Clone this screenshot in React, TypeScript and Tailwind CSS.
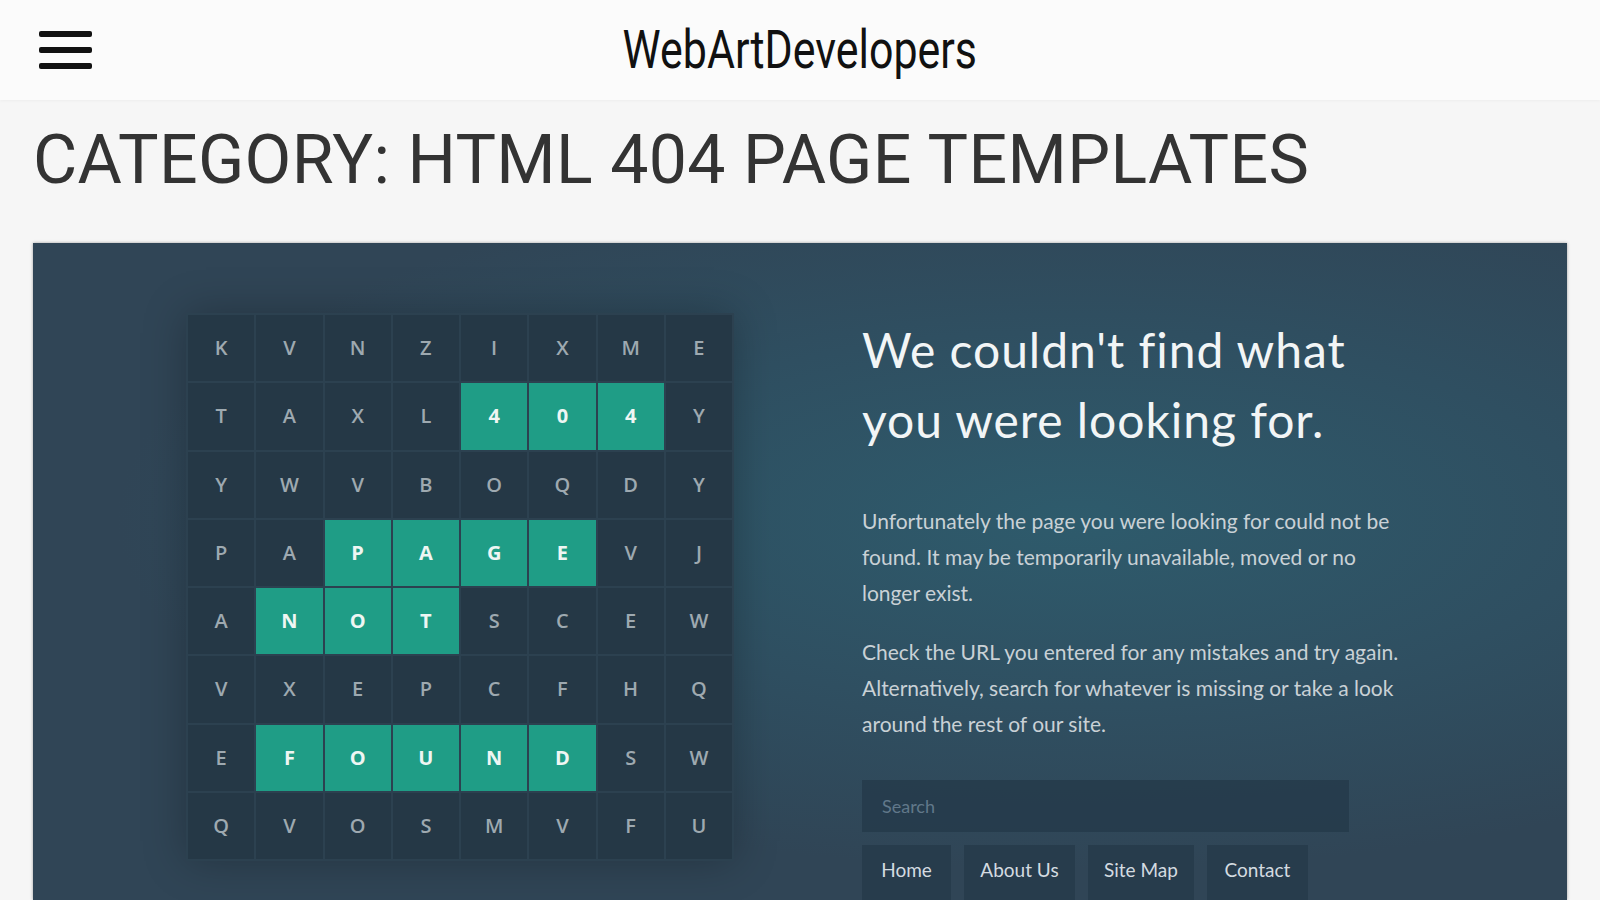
import React from 'react';

const rows = [
  'KVNZIXME',
  'TAXL404Y',
  'YWVBOQDY',
  'PAPAGEVJ',
  'ANOTSCEW',
  'VXEPCFHQ',
  'EFOUNDSW',
  'QVOSMVFU',
];

// highlighted cells: [row, col]
const lit: Record<number, number[]> = {
  1: [4, 5, 6],
  3: [2, 3, 4, 5],
  4: [1, 2, 3],
  6: [1, 2, 3, 4, 5],
};

const LetterGrid: React.FC = () => (
  <div className="grid h-[548px] w-[548px] shrink-0 grid-cols-8 gap-[2px] bg-[#2c4150] p-[2px] shadow-[0_0_40px_rgba(0,0,0,0.25)]">
    {rows.map((row, r) =>
      row.split('').map((ch, c) => {
        const on = lit[r]?.includes(c);
        return (
          <div
            key={`${r}-${c}`}
            className={
              on
                ? 'flex items-center justify-center bg-[#1f9d86] text-[20px] font-bold text-[#eef6f3]'
                : 'flex items-center justify-center bg-[#253846] text-[20px] font-semibold text-[#9ea9b0]'
            }
            style={{ fontFamily: '"Open Sans", sans-serif' }}
          >
            {ch}
          </div>
        );
      })
    )}
  </div>
);

const links = [
  { label: 'Home', w: 'w-[89px]' },
  { label: 'About Us', w: 'w-[111px]' },
  { label: 'Site Map', w: 'w-[106px]' },
  { label: 'Contact', w: 'w-[101px]' },
];

const App: React.FC = () => {
  return (
    <div className="h-[900px] overflow-hidden bg-[#f6f6f6]" style={{ fontFamily: 'Roboto, sans-serif' }}>
      <header className="grid h-[100px] grid-cols-[1fr_auto_1fr] items-center bg-[#fbfbfb] shadow-[0_1px_3px_rgba(0,0,0,0.04)]">
        <div className="pl-[39px]">
          <div className="flex w-[53px] flex-col gap-[10px]">
            <span className="h-[6px] rounded-[2px] bg-[#111]" />
            <span className="h-[6px] rounded-[2px] bg-[#111]" />
            <span className="h-[6px] rounded-[2px] bg-[#111]" />
          </div>
        </div>
        <div className="inline-block origin-center scale-x-[0.81] text-[53px] leading-none text-[#111]">
          WebArtDevelopers
        </div>
        <div />
      </header>

      <main>
        <h1 className="mt-[26px] mb-[49px] pl-[33px] text-[68px] leading-none font-normal tracking-[0.005em] uppercase text-[#333]">
          Category: HTML 404 Page Templates
        </h1>

        <section className="mx-[33px] flex h-[657px] bg-[#304556] bg-[radial-gradient(ellipse_at_68%_42%,#2e5b6c_0%,#2f4f61_35%,#304556_65%)] pt-[70px] pl-[153px] shadow-[0_0_3px_rgba(0,0,0,0.35)]">
          <LetterGrid />

          <div className="ml-[128px] flex flex-col" style={{ fontFamily: 'Lato, sans-serif' }}>
            <h2 className="mt-[2px] text-[48px] leading-[70px] font-normal tracking-[0.02em] text-[#f2f5f6]">
              We couldn't find what
              <br />
              you were looking for.
            </h2>

            <p className="mt-[48px] whitespace-nowrap text-[21px] leading-[36px] text-[#c9d1d6]">
              Unfortunately the page you were looking for could not be
              <br />
              found. It may be temporarily unavailable, moved or no
              <br />
              longer exist.
            </p>

            <p className="mt-[23px] whitespace-nowrap text-[21px] leading-[36px] text-[#c9d1d6]">
              Check the URL you entered for any mistakes and try again.
              <br />
              Alternatively, search for whatever is missing or take a look
              <br />
              around the rest of our site.
            </p>

            <input
              type="text"
              placeholder="Search"
              className="mt-[38px] h-[52px] w-[487px] shrink-0 bg-[#24394a]/80 pl-[20px] text-[18px] text-[#c9d1d6] outline-none placeholder:text-[#61788a]"
            />

            <nav className="mt-[13px] flex gap-[13px]">
              {links.map((l) => (
                <a
                  key={l.label}
                  href="#"
                  className={`flex h-[60px] justify-center bg-[#26394a]/80 pt-[12px] text-[19px] leading-[26px] text-[#d4dbe0] ${l.w}`}
                >
                  {l.label}
                </a>
              ))}
            </nav>
          </div>
        </section>
      </main>
    </div>
  );
};

export default App;
